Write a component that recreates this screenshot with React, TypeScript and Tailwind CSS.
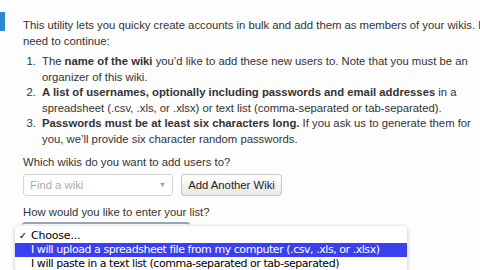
import React from "react";

const items = [
  {
    bold: "name of the wiki",
    pre: "The ",
    rest: " you\u2019d like to add these new users to. Note that you must be an organizer of this wiki.",
  },
  {
    bold: "A list of usernames, optionally including passwords and email addresses",
    pre: "",
    rest: " in a spreadsheet (.csv, .xls, or .xlsx) or text list (comma-separated or tab-separated).",
  },
  {
    bold: "Passwords must be at least six characters long.",
    pre: "",
    rest: " If you ask us to generate them for you, we\u2019ll provide six character random passwords.",
  },
];

export default function App() {
  return (
    <div
      className="relative w-[480px] h-[270px] overflow-hidden bg-[#fdfdfd] text-[#333]"
      style={{ fontFamily: '"Liberation Sans", Arial, sans-serif' }}
    >
      <div className="absolute left-0 top-[12px] w-[5px] h-[19px] bg-[#2b8bd2]" />
      <div className="pl-[23px] pt-[17px]">
        <p className="w-[552px] text-[11.3px] leading-[16px]">
          This utility lets you quicky create accounts in bulk and add them as members of your wikis. Here&apos;s what you&apos;ll need to continue:
        </p>
        <ol className="mt-[5px] w-[449px] text-[11.3px] leading-[15.5px]">
          {items.map((it, i) => (
            <li key={i} className="flex">
              <span className="w-[19px] shrink-0 text-right pr-[6px]">{i + 1}.</span>
              <span>
                {it.pre}
                <b>{it.bold}</b>
                {it.rest}
              </span>
            </li>
          ))}
        </ol>
        <p className="mt-[7px] text-[11.3px] leading-[16px]">Which wikis do you want to add users to?</p>
        <div className="mt-[4px] flex gap-[8px]">
          <div className="w-[150px] h-[22px] border border-[#d4d4d4] rounded-[3px] bg-white flex items-center justify-between px-[6px] text-[11.3px] text-[#aaa]">
            <span>Find a wiki</span>
            <span className="text-[7px] text-[#999]">&#9660;</span>
          </div>
          <div className="w-[101px] h-[22px] border border-[#c8c8c8] rounded-[3px] bg-gradient-to-b from-white to-[#e8e8e8] flex items-center justify-center text-[11.3px] text-[#222]">
            Add Another Wiki
          </div>
        </div>
        <p className="mt-[8px] text-[11.3px] leading-[16px]">How would you like to enter your list?</p>
        <div className="mt-[2px] ml-[-1px] w-[168px] h-[20px] border-t-2 border-[#9aa6b4] rounded-t-[3px]" />
      </div>
      <div
        className="absolute left-[15px] top-[226px] w-[392px] bg-white rounded-[4px] shadow-[0_1px_4px_rgba(0,0,0,0.25)] pt-[2px] text-[11px] leading-[14px] text-black whitespace-nowrap"
        style={{ fontFamily: '"DejaVu Sans", "Lucida Grande", sans-serif' }}
      >
        <div className="flex h-[15px] items-center">
          <span className="w-[16px] text-center text-[10px]">&#10003;</span>
          <span className="tracking-[-0.2px]">Choose...</span>
        </div>
        <div className="flex h-[14px] items-center bg-[#3a3ff0] text-white">
          <span className="w-[16px]" />
          <span className="tracking-[-0.45px]">I will upload a spreadsheet file from my computer (.csv, .xls, or .xlsx)</span>
        </div>
        <div className="flex h-[14px] items-center">
          <span className="w-[16px]" />
          <span className="tracking-[-0.45px]">I will paste in a text list (comma-separated or tab-separated)</span>
        </div>
      </div>
    </div>
  );
}
